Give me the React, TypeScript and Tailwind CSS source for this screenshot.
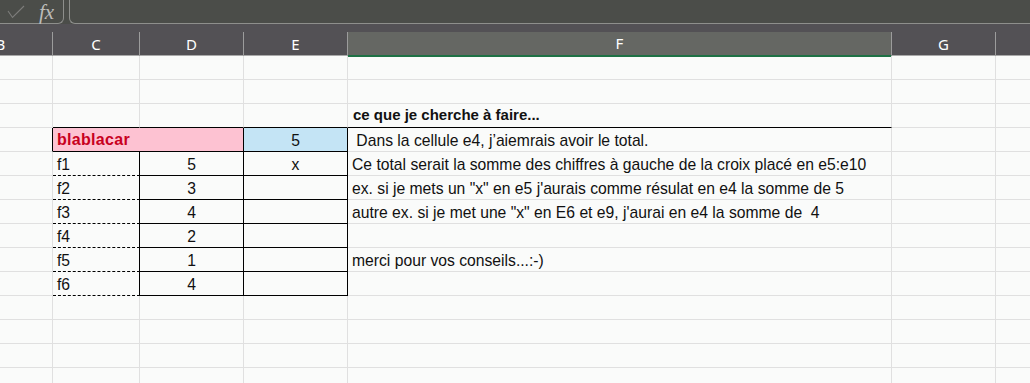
import type { ReactNode } from 'react';

// H sits past the right edge, so its label is left out
const cols = ['B', 'C', 'D', 'E', 'F', 'G', ''];

type Cell = {
  text?: ReactNode;
  className?: string;
  span?: number;
};

// one row = 7 cells (B..H), unless a cell spans
const rows: Cell[][] = [
  [{}, {}, {}, {}, {}, {}, {}],
  [{}, {}, {}, {}, {}, {}, {}],
  [
    {},
    { className: 'border-b-black' },
    { className: 'border-b-black' },
    { className: 'border-b-black' },
    { text: 'ce que je cherche à faire...', className: 'border-b-black font-bold text-[15px] pl-[5px]' },
    {},
    {},
  ],
  [
    { className: 'border-r-black' },
    {
      text: 'blablacar',
      span: 2,
      className: 'bg-[#fdc2d2] border-r-black border-b-black font-bold text-[16px] text-[#c8001e] pl-[4px] tracking-[0.3px]',
    },
    { text: '5', className: 'bg-[#c4e4f5] border-r-black border-b-black justify-center pt-[2px]' },
    { text: ' Dans la cellule e4, j’aiemrais avoir le total.', className: 'pl-[4px] pt-[2px]' },
    {},
    {},
  ],
];

const data = [
  ['f1', '5', 'x', 'Ce total serait la somme des chiffres à gauche de la croix placé en e5:e10'],
  ['f2', '3', '', 'ex. si je mets un "x" en e5 j\'aurais comme résulat en e4 la somme de 5'],
  ['f3', '4', '', 'autre ex. si je met une "x" en E6 et e9, j\'aurai en e4 la somme de  4'],
  ['f4', '2', '', ''],
  ['f5', '1', '', 'merci pour vos conseils...:-)'],
  ['f6', '4', '', ''],
];

data.forEach(([c, d, e, f]) => {
  rows.push([
    {},
    { text: c, className: 'border-b-black [border-bottom-style:dashed] border-r-black pl-[4px] pt-[2px]' },
    { text: d, className: 'border-b-black border-r-black justify-center pt-[2px]' },
    { text: e, className: 'border-b-black border-r-black justify-center pt-[2px]' },
    { text: f, className: 'pl-[4px] pt-[2px]' },
    {},
    {},
  ]);
});

for (let i = 0; i < 4; i++) rows.push([{}, {}, {}, {}, {}, {}, {}]);

function CheckIcon() {
  return (
    <svg width="18" height="14" viewBox="0 0 18 14" fill="none">
      <path d="M1 6 L5.5 12.5 L17 1" stroke="#7d7d7b" strokeWidth="1.1" />
    </svg>
  );
}

export default function App() {
  return (
    <div className="w-[1030px] h-[383px] overflow-hidden bg-[#fafbfa] font-['Liberation_Sans',sans-serif]">
      {/* Formula bar */}
      <div className="h-[24px] bg-[#4b4d49] flex">
        <div className="w-[64px] h-full border-b border-r border-[#8e8f8c] rounded-br-[6px] flex items-center pl-[7px] gap-[14px]">
          <CheckIcon />
          <span className="font-['Liberation_Serif',serif] italic text-[21px] leading-[20px] text-[#bcbcba]">
            fx
          </span>
        </div>
        <div className="w-[5px]" />
        <div className="flex-1 h-full border-b border-l border-[#8e8f8c] rounded-bl-[6px]" />
      </div>
      <div className="h-[8px] bg-[#535155]" />

      {/* Column headers */}
      <div className="-ml-[51px] grid grid-cols-[104px_87px_104px_104px_544px_104px_104px] h-[24px] bg-[#535155] border-b border-[#a9a9a9]">
        {cols.map((c, i) => (
          <div
            key={i}
            className={`flex items-center justify-center border-r border-[#9c9c9c] font-['Noto_Sans',sans-serif] text-[15px] text-white ${
              c === 'F' ? 'bg-[#656763] border-b-[2px] border-b-[#1e7145]' : ''
            }`}
          >
            {c}
          </div>
        ))}
      </div>

      {/* Sheet */}
      <div className="-ml-[51px] grid grid-cols-[104px_87px_104px_104px_544px_104px_104px] auto-rows-[24px] text-[15.7px] text-[#111]">
        {rows.map((row, ri) =>
          row.map((cell, ci) => (
            <div
              key={`${ri}-${ci}`}
              className={`flex items-center whitespace-pre overflow-visible border-r border-b border-[#e0e0e0] ${
                cell.span === 2 ? 'col-span-2' : ''
              } ${cell.className ?? ''}`}
            >
              {cell.text}
            </div>
          ))
        )}
      </div>
    </div>
  );
}
